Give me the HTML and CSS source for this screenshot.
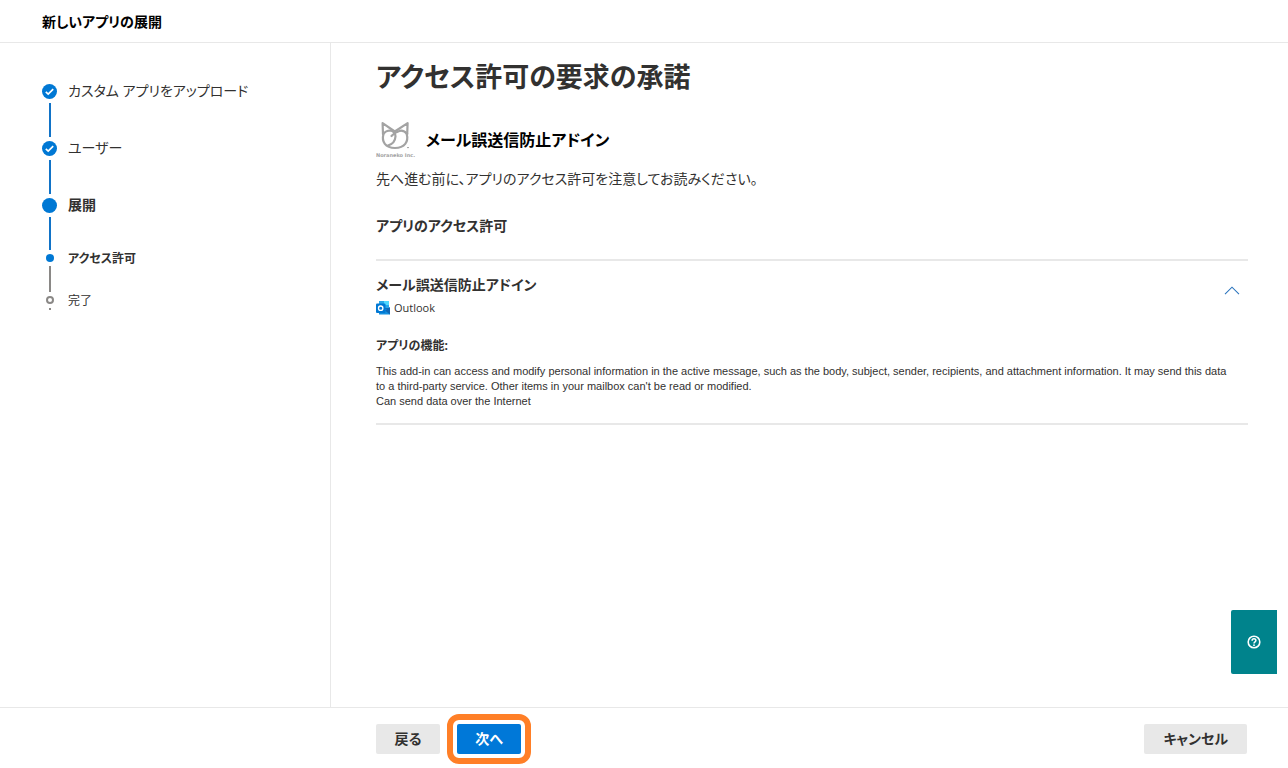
FILE: index.html
```html
<!DOCTYPE html>
<html lang="ja">
<head>
<meta charset="utf-8">
<meta name="viewport" content="width=device-width, initial-scale=1">
<title>新しいアプリの展開</title>
<link rel="stylesheet" href="styles.css">
</head>
<body>
<header class="topbar"><h2 class="topbar-title">新しいアプリの展開</h2></header>
<div class="body">
  <nav class="sidebar" aria-label="手順">
    <ol class="steps">
      <li class="step step-done">
        <span class="rail"><svg class="dot" width="15" height="15" viewBox="0 0 15 15" aria-hidden="true"><circle cx="7.5" cy="7.5" r="7.5" fill="#0078d4"/><path d="M3.8 7.8 6.2 10.1 11.2 5.1" fill="none" stroke="#fff" stroke-width="1.7"/></svg><span class="line"></span></span>
        <span class="step-label">カスタム アプリをアップロード</span>
      </li>
      <li class="step step-done">
        <span class="rail"><svg class="dot" width="15" height="15" viewBox="0 0 15 15" aria-hidden="true"><circle cx="7.5" cy="7.5" r="7.5" fill="#0078d4"/><path d="M3.8 7.8 6.2 10.1 11.2 5.1" fill="none" stroke="#fff" stroke-width="1.7"/></svg><span class="line"></span></span>
        <span class="step-label">ユーザー</span>
      </li>
      <li class="step step-current">
        <span class="rail"><span class="dot dot-full"></span><span class="line"></span></span>
        <span class="step-label">展開</span>
      </li>
      <li class="step substep substep-current" aria-current="step">
        <span class="rail"><span class="dot dot-small"></span><span class="line"></span></span>
        <span class="step-label">アクセス許可</span>
      </li>
      <li class="step substep substep-last">
        <span class="rail"><span class="dot dot-ring"></span><span class="line"></span></span>
        <span class="step-label">完了</span>
      </li>
    </ol>
  </nav>
  <main class="main">
    <h1 class="title">アクセス許可の要求の承諾</h1>
    <div class="app">
      <svg class="app-logo" width="40" height="38" viewBox="0 0 40 38" role="img" aria-label="Noraneko Inc.">
        <g fill="none" stroke="#a3a3a3" stroke-width="2.2" stroke-linejoin="round" stroke-linecap="round">
          <path d="M7 13 6.600 2.200 18.800 10.500 31.600 2.200 31.200 13"/>
          <path d="M7 13Q10 9.500 14 9.500 19.500 10.500 19.500 15.500 19 22.500 12 24.500"/>
          <path d="M31.200 13Q28 9.200 24 9.800 18.500 11.500 15.500 15"/>
          <path d="M7.600 12.500C5.200 21 9.500 27 19 27S33 21 30.600 12.500"/>
        </g>
        <path d="M31 26.6h2" stroke="#a3a3a3"/>
        <text class="logo-text" x="0" y="36">Noraneko Inc.</text>
      </svg>
      <h2 class="app-name">メール誤送信防止アドイン</h2>
    </div>
    <p class="lead">先へ進む前に、アプリのアクセス許可を注意してお読みください。</p>
    <h3 class="section-title">アプリのアクセス許可</h3>
    <section class="permission">
      <div class="permission-head">
        <div>
          <h3 class="permission-name">メール誤送信防止アドイン</h3>
          <div class="host">
            <svg width="14" height="14" viewBox="0 0 14 14" aria-hidden="true"><path d="M3 0h10v5H3z" fill="#28a8ea"/><path d="M8 0h5v5H8z" fill="#50d9ff"/><path d="M3 4h10v5H3z" fill="#0f6cbd"/><path d="M9 4h4v3H9z" fill="#28a8ea"/><path d="M3 13.5V8h10l1-2v7.500z" fill="#1490df"/><path d="M9 9.500 14 6v7.500z" fill="#1066b5"/><rect y="2.500" width="9.500" height="9.500" rx="1" fill="#0078d4"/><circle cx="4.700" cy="7.200" r="2.200" fill="none" stroke="#fff" stroke-width="1.300"/></svg>
            <span>Outlook</span>
          </div>
        </div>
        <button class="collapse" type="button" aria-label="折りたたむ" aria-expanded="true"><svg width="16" height="9" viewBox="0 0 16 9" aria-hidden="true"><path d="M1 8.2 8 1.2 15 8.2" fill="none" stroke="#2b74bd" stroke-width="1.1"/></svg></button>
      </div>
      <h4 class="features">アプリの機能:</h4>
      <p class="details">This add-in can access and modify personal information in the active message, such as the body, subject, sender, recipients, and attachment information. It may send this data to a third-party service. Other items in your mailbox can't be read or modified.<br>Can send data over the Internet</p>
    </section>
  </main>
</div>
<footer class="footer">
  <button class="btn" type="button">戻る</button>
  <span class="highlight"><button class="btn btn-primary" type="button">次へ</button></span>
  <button class="btn btn-cancel" type="button">キャンセル</button>
</footer>
<button class="help" type="button" aria-label="ヘルプ"><svg width="14" height="14" viewBox="0 0 14 14" aria-hidden="true"><circle cx="7" cy="7" r="5.8" fill="none" stroke="#fff" stroke-width="1.6"/><path d="M5.1 5.7C5.1 3.2 8.9 3.3 8.9 5.6 8.9 7 7 6.9 7 8.6" fill="none" stroke="#fff" stroke-width="1.5"/><circle cx="7" cy="10.2" r=".9" fill="#fff"/></svg></button>
</body>
</html>
```
FILE: styles.css
```css
* { box-sizing: border-box; }
body {
  margin: 0;
  min-height: 100vh;
  display: flex;
  flex-direction: column;
  background: #fff;
  color: #323130;
  font-family: "Open Sans", "Noto Sans CJK JP", sans-serif;
  font-feature-settings: "palt";
  font-size: 14px;
  line-height: 20px;
}
h1, h2, h3, h4, p, ol { margin: 0; padding: 0; }
h1, h2, h3, h4 { font-weight: 700; }
button { font: inherit; font-feature-settings: inherit; cursor: pointer; }
.topbar { padding: 12px 42px 10px; border-bottom: 1px solid #e8e8e8; }
.topbar-title { font-size: 14px; color: #000; }
.body { flex: 1; display: flex; }
.sidebar { width: 331px; flex-shrink: 0; padding: 41px 24px 0 42px; border-right: 1px solid #e8e8e8; }
.steps { list-style: none; }
.step { display: flex; gap: 11px; height: 57px; }
.step-label { height: 14px; line-height: 14px; white-space: nowrap; }
.rail { width: 15px; display: flex; flex-direction: column; align-items: center; gap: 4px; padding-bottom: 4px; }
.dot { flex-shrink: 0; display: block; }
.line { flex: 1; width: 2px; background: #1173c7; }
.dot-full { width: 15px; height: 15px; border-radius: 50%; background: #0078d4; }
.dot-small { width: 8px; height: 8px; border-radius: 50%; background: #0078d4; }
.dot-ring { width: 8px; height: 8px; border: 2px solid #8a8886; border-radius: 50%; }
.step-current { font-weight: 700; height: 56px; }
.substep { font-size: 12px; height: 42px; }
.substep .step-label { height: 10px; line-height: 10px; }
.substep .line { background: #8a8886; }
.substep-current { font-weight: 700; }
.substep-last { height: 14px; }
.substep-last .rail { padding-bottom: 0; }
.main { flex: 1; min-width: 0; padding: 14px 40px 24px 45px; }
.title { font-size: 27px; line-height: 40px; }
.app { display: flex; align-items: center; gap: 10px; margin-top: 24px; }
.logo-text { font-family: "DejaVu Sans", sans-serif; font-size: 5px; font-weight: 700; fill: #a3a3a3; }
.app-name { font-size: 16px; color: #000; }
.lead { margin-top: 10px; }
.section-title { margin-top: 27px; font-size: 14px; }
.permission { margin-top: 23px; padding: 14px 0; border: solid #e8e8e8; border-width: 2px 0; }
.permission-head { display: flex; justify-content: space-between; align-items: flex-start; }
.permission-name { font-size: 14px; }
.host { display: flex; align-items: center; gap: 4px; margin-top: 3px; font-size: 11px; }
.collapse { display: flex; margin-top: 3px; padding: 8px; border: 0; background: none; }
.features { margin-top: 18px; font-size: 12px; }
.details { margin-top: 8px; padding-right: 14px; font-family: "Liberation Sans", sans-serif; font-size: 11px; line-height: 15px; }
.footer { display: flex; align-items: center; gap: 7px; padding: 6px 41px 4px 376px; border-top: 1px solid #e8e8e8; }
.btn { min-width: 64px; height: 30px; padding: 0 18px; border: 0; border-radius: 2px; background: #e8e8e8; color: #323130; font-weight: 700; }
.btn-primary { background: #0078d8; color: #fff; }
.highlight { display: flex; padding: 4px; border: 6px solid #ff7f27; border-radius: 12px; }
.btn-cancel { margin-left: auto; padding: 0 19px; }
.help { position: fixed; right: 11px; bottom: 94px; width: 46px; height: 64px; display: flex; align-items: center; justify-content: center; border: 0; border-radius: 2px 0 0 2px; background: #00838c; }
```
